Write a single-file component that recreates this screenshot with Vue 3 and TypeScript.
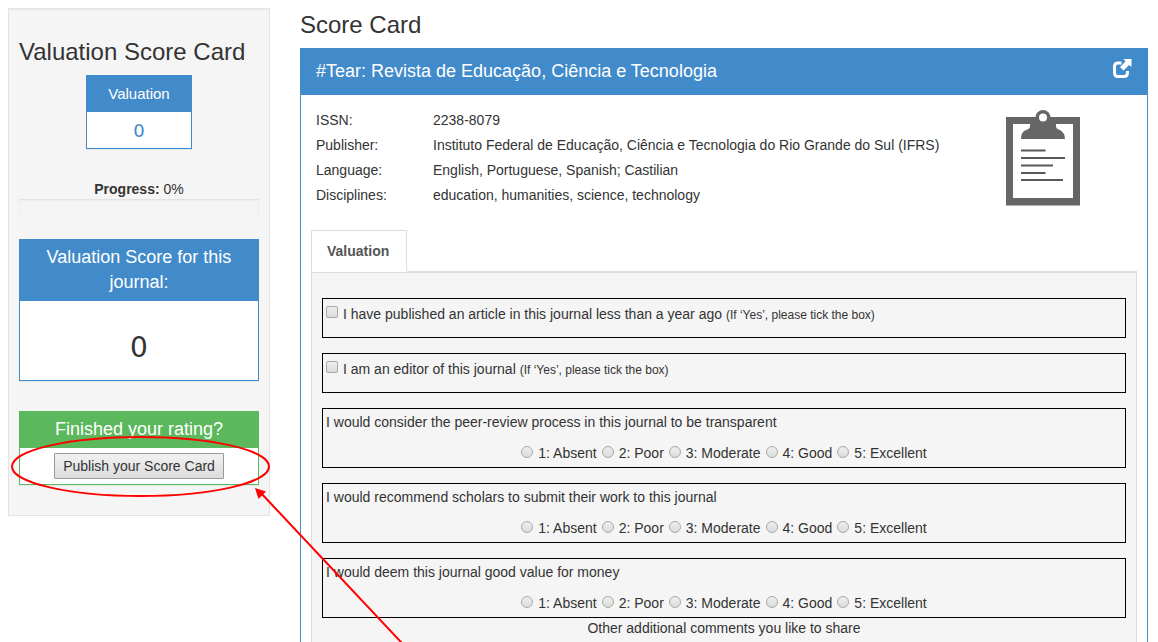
<script setup lang="ts">
import { ref } from 'vue'

interface Fact { label: string; value: string }
interface Check { id: string; text: string }
interface Question { id: string; text: string }

const facts: Fact[] = [
  { label: 'ISSN:', value: '2238-8079' },
  { label: 'Publisher:', value: 'Instituto Federal de Educação, Ciência e Tecnologia do Rio Grande do Sul (IFRS)' },
  { label: 'Language:', value: 'English, Portuguese, Spanish; Castilian' },
  { label: 'Disciplines:', value: 'education, humanities, science, technology' },
]
const checks: Check[] = [
  { id: 'published', text: 'I have published an article in this journal less than a year ago' },
  { id: 'editor', text: 'I am an editor of this journal' },
]
const questions: Question[] = [
  { id: 'q1', text: 'I would consider the peer-review process in this journal to be transparent' },
  { id: 'q2', text: 'I would recommend scholars to submit their work to this journal' },
  { id: 'q3', text: 'I would deem this journal good value for money' },
]
const options: string[] = ['1: Absent', '2: Poor', '3: Moderate', '4: Good', '5: Excellent']

const ticked = ref<string[]>([])
const answers = ref<Record<string, number>>({})
</script>

<template>
  <div class="page">
    <aside class="sidebar">
      <h2 class="title">Valuation Score Card</h2>
      <section class="box small-box">
        <h3 class="box-head small-head">Valuation</h3>
        <div class="score small-score">0</div>
      </section>
      <div class="progress-text"><strong>Progress:</strong> 0%</div>
      <div class="progress" role="progressbar" aria-label="Progress" aria-valuenow="0" aria-valuemin="0" aria-valuemax="100"></div>
      <section class="box total-box">
        <h3 class="box-head">Valuation Score for this journal:</h3>
        <div class="score total-score">0</div>
      </section>
      <section class="box finish-box">
        <h3 class="box-head">Finished your rating?</h3>
        <div class="finish-body">
          <button type="button" class="publish">Publish your Score Card</button>
        </div>
        <svg class="callout" width="400" height="320" viewBox="0 0 400 320" aria-hidden="true">
          <ellipse cx="130.500" cy="32.500" rx="128.500" ry="29.500" fill="none" stroke="#f00" stroke-width="2" />
          <path d="M250 58 421 240" stroke="#f00" stroke-width="2" />
          <path d="M245 54 256 57.500 248.500 65Z" fill="#f00" />
        </svg>
      </section>
    </aside>

    <main class="main">
      <h2 class="title">Score Card</h2>
      <article class="panel">
        <header class="panel-head">
          <h3 class="journal">#Tear: Revista de Educação, Ciência e Tecnologia</h3>
          <a class="open" href="#" aria-label="Open journal">
            <svg width="20" height="20" viewBox="0 0 20 20">
              <path d="M9.500 4H6Q2.500 4 2.500 7.500V13.500Q2.500 17.500 6 17.500H12Q15.500 17.500 15.500 13.500V12" fill="none" stroke="#fff" stroke-width="3" />
              <path d="M11.500 0H19.500V8L17 6 11.500 11.500 8 8 13.500 2.500Z" fill="#fff" />
            </svg>
          </a>
        </header>
        <div class="info">
          <dl class="facts">
            <template v-for="f in facts" :key="f.label">
              <dt>{{ f.label }}</dt>
              <dd>{{ f.value }}</dd>
            </template>
          </dl>
          <svg class="clipboard" width="74" height="96" viewBox="0 0 74 96" aria-hidden="true">
            <path d="M0 7H74V95.500H0Z" fill="#666" />
            <path d="M7 14H67V88H7Z" fill="#fff" />
            <path d="M24 14H50Q49 19 54 20Q59 23 59 29H15Q15 22 20 20Q25 19 24 14Z" fill="#666" />
            <circle cx="37" cy="7.500" r="7.500" fill="#666" />
            <circle cx="37" cy="7.500" r="4" fill="#fff" />
            <path d="M15 40.500H39.500M15 48H59M15 55.500H47M15 63H39.500M15 70H57" stroke="#595959" stroke-width="2" />
          </svg>
        </div>
        <div class="tabs" role="tablist">
          <button type="button" class="tab" role="tab" aria-selected="true">Valuation</button>
        </div>
        <div class="form">
          <div v-for="c in checks" :key="c.id" class="item check-item">
            <input :id="c.id" v-model="ticked" type="checkbox" class="tick" :value="c.id" />
            <label :for="c.id">{{ c.text }} <small>(If ‘Yes’, please tick the box)</small></label>
          </div>
          <fieldset v-for="q in questions" :key="q.id" class="item question" :aria-labelledby="q.id">
            <div :id="q.id" class="question-text">{{ q.text }}</div>
            <div class="options">
              <label v-for="(o, i) in options" :key="o" class="option">
                <input v-model="answers[q.id]" type="radio" class="radio" :name="q.id + '-score'" :value="i + 1" />
                <span>{{ o }}</span>
              </label>
            </div>
          </fieldset>
          <div class="comments">Other additional comments you like to share</div>
        </div>
      </article>
    </main>
  </div>
</template>

<style>
body {
  margin: 0;
  background: #fff;
}
</style>

<style scoped>
* {
  box-sizing: border-box;
}
.page {
  display: grid;
  grid-template-columns: 262px minmax(0, 1fr);
  gap: 30px;
  height: 100vh;
  padding: 8px 10px 0 8px;
  overflow: hidden;
  font: 14px/20px "Liberation Sans", Arial, sans-serif;
  color: #333;
}
h2, h3, dl, dd {
  margin: 0;
  font-weight: 400;
}
.title {
  font-size: 24px;
  line-height: 32px;
  white-space: nowrap;
}
.sidebar {
  align-self: start;
  padding: 27px 10px 30px;
  background: #f5f5f5;
  border: 1px solid #e3e3e3;
  box-shadow: inset 0 1px 1px rgba(0, 0, 0, 0.05);
}
.box {
  border: 1px solid #428bca;
  background: #fff;
  text-align: center;
  box-shadow: 0 1px 1px rgba(0, 0, 0, 0.05);
}
.box-head {
  padding: 5px 15px 6px;
  background: #428bca;
  color: #fff;
  font-size: 18px;
  line-height: 25px;
}
.small-box {
  width: 106px;
  margin: 7px auto 30px;
}
.small-head {
  font-size: 15px;
}
.score {
  font-family: "DejaVu Sans", sans-serif;
}
.small-score {
  padding-top: 2px;
  color: #428bca;
  font-size: 18px;
  line-height: 34px;
}
.progress-text {
  text-align: center;
}
.progress {
  height: 20px;
  margin-bottom: 20px;
  box-shadow: inset 0 1px 2px rgba(0, 0, 0, 0.1);
}
.total-box {
  margin-bottom: 30px;
}
.total-score {
  padding-top: 14px;
  font-size: 28px;
  line-height: 65px;
}
.finish-box {
  position: relative;
  border-color: #5cb85c;
}
.finish-box .box-head {
  background: #5cb85c;
}
.finish-body {
  display: flex;
  justify-content: center;
  padding: 5px;
}
.publish {
  height: 26px;
  padding: 0 8px;
  border: 1px solid #999;
  border-radius: 1px;
  background: linear-gradient(#f2f2f2, #dcdcdc);
  color: #333;
  font: inherit;
  white-space: nowrap;
}
.callout {
  position: absolute;
  left: -10px;
  top: 22px;
  overflow: visible;
  pointer-events: none;
}
.main {
  display: flex;
  flex-direction: column;
}
.main > .title {
  padding-top: 1px;
}
.panel {
  display: flex;
  flex: 1 0 auto;
  flex-direction: column;
  margin-top: 7px;
  border: 1px solid #428bca;
  border-bottom: 0;
}
.panel-head {
  display: flex;
  align-items: flex-start;
  justify-content: space-between;
  min-height: 46px;
  padding: 10px 15px;
  background: #428bca;
  color: #fff;
}
.journal {
  font-size: 18px;
  line-height: 24px;
}
.open {
  display: flex;
}
.info {
  display: flex;
  justify-content: space-between;
  padding: 13px 67px 22px 15px;
}
.facts {
  display: grid;
  grid-template-columns: 117px 1fr;
  line-height: 25px;
}
.clipboard {
  flex: none;
  margin-top: 2px;
}
.tabs {
  display: flex;
  margin: 0 10px;
  border-bottom: 1px solid #ddd;
}
.tab {
  height: 42px;
  margin-bottom: -1px;
  padding: 0 17px 0 15px;
  border: 1px solid #ddd;
  border-bottom-color: #fff;
  background: #fff;
  color: #555;
  font: bold 14px/20px "Liberation Sans", Arial, sans-serif;
}
.form {
  flex: 1;
  margin: 0 10px;
  padding: 25px 10px 0;
  border: 1px solid #ddd;
  border-bottom: 0;
  background: #f5f5f5;
}
.item {
  min-width: 0;
  margin: 0 0 15px;
  padding: 3px;
  border: 1px solid #000;
}
.check-item {
  display: flex;
  align-items: flex-start;
  gap: 5px;
  height: 40px;
}
.check-item label {
  line-height: 25px;
}
small {
  font-size: 12px;
}
.tick, .radio {
  flex: none;
  width: 12px;
  height: 12px;
  margin: 0;
  border: 1px solid #aaa;
  appearance: none;
  background: linear-gradient(#eee, #dcdcdc);
}
.tick {
  margin-top: 4px;
  border-radius: 2px;
}
.tick:checked, .radio:checked {
  background: #666;
}
.question {
  height: 60px;
}
.question-text {
  line-height: 20px;
}
.options {
  display: flex;
  justify-content: center;
  gap: 5px;
  padding-top: 11px;
}
.option {
  display: flex;
  gap: 5px;
}
.radio {
  margin-top: 3px;
  border-radius: 50%;
}
.comments {
  margin-top: -15px;
  text-align: center;
}
</style>
